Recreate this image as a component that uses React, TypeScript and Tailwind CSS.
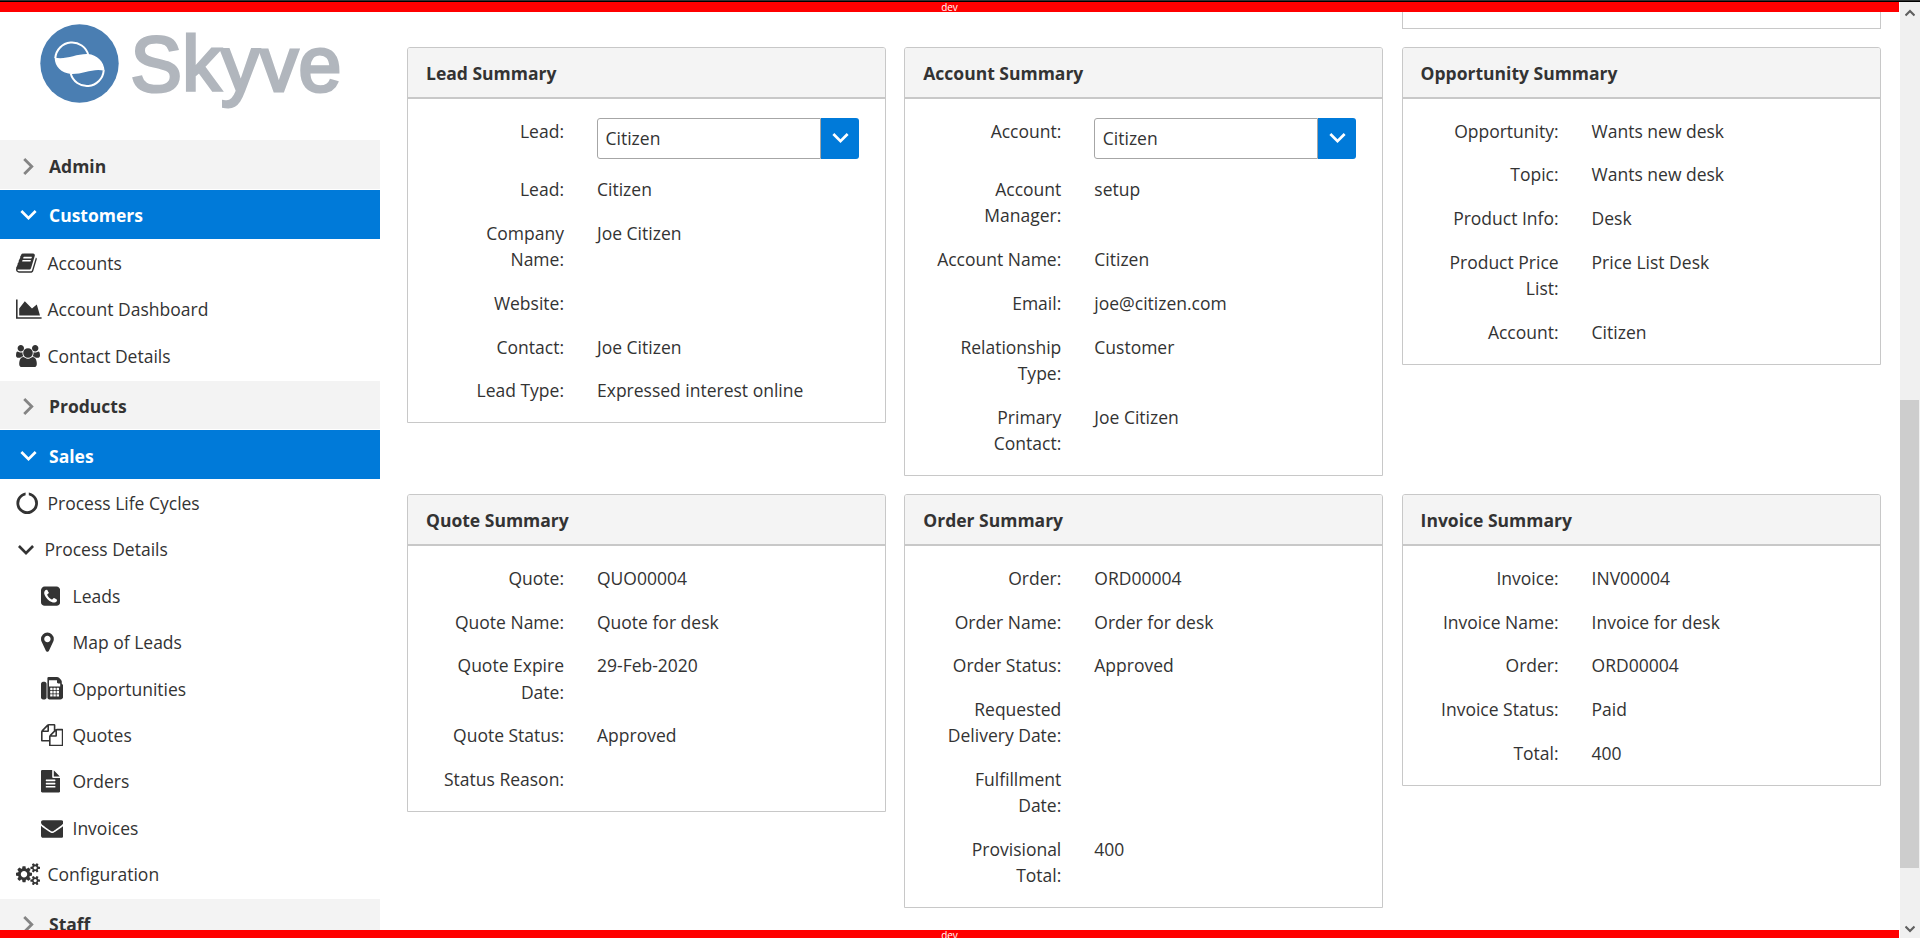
import React from "react";

type Glyph = { box: string; width: string; path: string };

const fileLine = (y: number) =>
  `M1280 ${y}v-64q0-14-9-23t-23-9h-704q-14 0-23 9t-9 23v64q0 14 9 23t23 9h704q14 0 23-9t9-23z`;
const faxKey = (x: number, y: number) =>
  `M${x} ${y}v-128q0-14-9-23t-23-9h-128q-14 0-23 9t-9 23v128q0 14 9 23t23 9h128q14 0 23-9t9-23z`;
const smallCog = (y: number) =>
  `M1920 ${y}v140q0 16-149 31-12 27-30 52 51 113 51 138 0 4-4 7-122 71-124 71-8 0-46-47t-52-68q-20 2-30 2t-30-2q-14 21-52 68t-46 47q-2 0-124-71-4-3-4-7 0-25 51-138-18-25-30-52-149-15-149-31v-140q0-16 149-31 13-29 30-52-51-113-51-138 0-4 4-7 4-2 35-20t59-34 30-16q8 0 46 46.5t52 67.5q20-2 30-2t30 2q51-71 92-112l6-2q4 0 124 70 4 3 4 7 0 25-51 138 17 23 30 52 149 15 149 31z`;

const glyphs: Record<string, Glyph> = {
  book: {
    box: "64 0 1664 1792",
    width: "w-[20.8px]",
    path: "M1703 478q40 57 18 129l-275 906q-19 64-76.5 107.5t-122.500 43.500h-923q-77 0-148.500-53.500t-99.500-131.500q-24-67-2-127 0-4 3-27t4-37q1-8-3-21.500t-3-19.500q2-11 8-21t16.500-23.500 16.500-23.500q23-38 45-91.500t30-91.500q3-10 .5-30t-.5-28q3-11 17-28t17-23q21-36 42-92t25-90q1-9-2.500-32t.5-28q4-13 22-30.500t22-22.500q19-26 42.500-84.500t27.500-96.500q1-8-3-25.500t-2-26.500q2-8 9-18t18-23 17-21q8-12 16.500-30.500t15-35 16-36 19.500-32 26.500-23.500 36-11.500 47.500 5.500l-1 3q38-9 51-9h761q74 0 114 56t18 130l-274 906q-36 119-71.500 153.500t-128.500 34.500h-869q-27 0-38 15-11 16-1 43 24 70 144 70h923q29 0 56-15.500t35-41.500l300-987q7-22 5-57 38 15 59 43zm-1064 2q-4 13 2 22.500t20 9.500h608q13 0 25.500-9.500t16.500-22.500l21-64q4-13-2-22.500t-20-9.500h-608q-13 0-25.500 9.500t-16.500 22.500zm-83 256q-4 13 2 22.500t20 9.500h608q13 0 25.500-9.500t16.500-22.500l21-64q4-13-2-22.500t-20-9.500h-608q-13 0-25.500 9.500t-16.500 22.500z",
  },
  chart: {
    box: "0 0 2048 1792",
    width: "w-[25.6px]",
    path: "M2048 1536v128h-2048v-1536h128v1408h1920zm-384-1024l256 896h-1664v-576l448-576 576 576z",
  },
  users: {
    box: "-64 0 1920 1792",
    width: "w-[24px]",
    path: "M529 896q-162 5-265 128h-134q-82 0-138-40.5t-56-118.500q0-353 124-353 6 0 43.500 21t97.500 42.500 119 21.500q67 0 133-23-5 37-5 66 0 139 81 256zm1071 637q0 120-73 189.500t-194 69.500h-874q-121 0-194-69.500t-73-189.500q0-53 3.500-103.500t14-109 26.500-108.500 43-97.500 62-81 85.500-53.500 111.500-20q10 0 43 21.500t73 48 107 48 135 21.500 135-21.500 107-48 73-48 43-21.500q61 0 111.500 20t85.500 53.500 62 81 43 97.500 26.500 108.500 14 109 3.500 103.500zm-1024-1277q0 106-75 181t-181 75-181-75-75-181 75-181 181-75 181 75 75 181zm704 384q0 159-112.500 271.500t-271.500 112.500-271.500-112.500-112.500-271.500 112.500-271.500 271.500-112.500 271.500 112.500 112.500 271.500zm576 225q0 78-56 118.500t-138 40.500h-134q-103-123-265-128 81-117 81-256 0-29-5-66 66 23 133 23 59 0 119-21.500t97.500-42.500 43.500-21q124 0 124 353zm-128-609q0 106-75 181t-181 75-181-75-75-181 75-181 181-75 181 75 75 181z",
  },
  notch: {
    box: "0 0 1792 1792",
    width: "w-[22.4px]",
    path: "M1760 896q0 176-68.500 336t-184 275.500-275.500 184-336 68.500-336-68.500-275.500-184-184-275.500-68.500-336q0-213 97-398.500t265-305.500 374-151v228q-221 45-366.500 221t-145.500 406q0 130 51 248.500t136.500 204 204 136.5 248.500 51 248.500-51 204-136.500 136.500-204 51-248.500q0-230-145.500-406t-366.500-221v-228q206 31 374 151t265 305.500 97 398.500z",
  },
  phone: {
    box: "128 0 1536 1792",
    width: "w-[19.2px]",
    path: "M1408 1193q0-11-2-16t-18-16.500-40.500-25-47.500-26.500-45.500-25-28.500-15q-5-3-19-13t-25-15-21-5q-15 0-36.500 20.500t-39.500 45-38.500 45-33.500 20.500q-7 0-16.500-3.500t-15.500-6.500-17-9.500-14-8.500q-99-55-170-126.500t-127-170.500q-2-3-8.500-14t-9.500-17-6.500-15.500-3.500-16.500q0-13 20.500-33.500t45-38.500 45-39.500 20.500-36.500q0-10-5-21t-15-25-13-19q-3-6-15-28.500t-25-45.500-26.500-47.500-25-40.500-16.500-18-16-2q-48 0-101 22-46 21-80 94.500t-34 130.500q0 16 2.500 34t5 30.500 9 33 10 29.500 12.500 33 11 30q60 164 216.500 320.500t320.500 216.500q6 2 30 11t33 12.500 29.500 10 33 9 30.500 5 34 2.500q57 0 130.500-34t94.500-80q22-53 22-101zm256-777v960q0 119-84.500 203.500t-203.500 84.500h-960q-119 0-203.500-84.500t-84.500-203.500v-960q0-119 84.500-203.500t203.500-84.500h960q119 0 203.500 84.500t84.500 203.500z",
  },
  marker: {
    box: "384 0 1024 1792",
    width: "w-[12.8px]",
    path: "M1152 640q0-106-75-181t-181-75-181 75-75 181 75 181 181 75 181-75 75-181zm256 0q0 109-33 179l-364 774q-16 33-47.500 52t-67.500 19-67.500-19-46.500-52l-365-774q-33-70-33-179 0-212 150-362t362-150 362 150 150 362z",
  },
  fax: {
    box: "0 0 1792 1792",
    width: "w-[22.4px]",
    path:
      "M288 384q66 0 113 47t47 113v1088q0 66-47 113t-113 47h-128q-66 0-113-47t-47-113v-1088q0-66 47-113t113-47h128zm1376 163q58 34 93 93t35 128v768q0 106-75 181t-181 75h-864q-66 0-113-47t-47-113v-1536q0-40 28-68t68-28h672q40 0 88 20t76 48l152 152q28 28 48 76t20 88v163zM1536 768v-256h-160q-40 0-68-28t-28-68v-160h-640v512h896z" +
      [928, 1184, 1440].map((x) => [1024, 1280, 1536].map((y) => faxKey(x, y)).join("")).join(""),
  },
  files: {
    box: "0 0 1792 1792",
    width: "w-[22.4px]",
    path: "M1696 384q40 0 68 28t28 68v1216q0 40-28 68t-68 28h-960q-40 0-68-28t-28-68v-288h-544q-40 0-68-28t-28-68v-672q0-40 20-88t48-76l408-408q28-28 76-48t88-20h416q40 0 68 28t28 68v328q68-40 128-40h416zm-544 213l-299 299h299v-299zm-640-384l-299 299h299v-299zm196 647l316-316v-416h-384v416q0 40-28 68t-68 28h-416v640h512v-256q0-40 20-88t48-76zm956 804v-1152h-384v416q0 40-28 68t-68 28h-416v640h896z",
  },
  file: {
    box: "128 0 1536 1792",
    width: "w-[19.2px]",
    path:
      "M1596 476q14 14 28 36h-472v-472q22 14 36 28zm-476 164h544v1056q0 40-28 68t-68 28h-1344q-40 0-68-28t-28-68v-1600q0-40 28-68t68-28h800v544q0 40 28 68t68 28z" +
      fileLine(1376) + fileLine(1120) + fileLine(864),
  },
  envelope: {
    box: "0 0 1792 1792",
    width: "w-[22.4px]",
    path: "M1792 710v794q0 66-47 113t-113 47h-1472q-66 0-113-47t-47-113v-794q44 49 101 87 362 246 497 345 57 42 92.500 65.500t94.500 48 110 24.500h2q51 0 110-24.500t94.500-48 92.500-65.500q170-123 498-345 57-39 100-87zm0-294q0 79-49 151t-122 123q-376 261-468 325-10 7-42.500 31t-54 38.500-52 32.500-57.500 27-50 9h-2q-23 0-50-9t-57.500-27-52-32.500-54-38.500-42.500-31q-91-64-262-182.500t-205-142.500q-62-42-117-115.500t-55-136.500q0-78 41.500-130t118.500-52h1472q65 0 112.500 47t47.500 113z",
  },
  cogs: {
    box: "0 0 1920 1792",
    width: "w-[24px]",
    path:
      "M896 896q0-106-75-181t-181-75-181 75-75 181 75 181 181 75 181-75 75-181zm768 512q0-52-38-90t-90-38-90 38-38 90q0 53 37.500 90.500t90.500 37.500 90.500-37.500 37.500-90.500zm0-1024q0-52-38-90t-90-38-90 38-38 90q0 53 37.500 90.500t90.500 37.500 90.500-37.500 37.500-90.500zm-384 421v185q0 10-7 19.500t-16 10.500l-155 24q-11 35-32 76 34 48 90 115 7 11 7 20 0 12-7 19-23 30-82.500 89.500t-78.500 59.500q-11 0-21-7l-115-90q-37 19-77 31-11 108-23 155-7 24-30 24h-186q-11 0-20-7.500t-10-17.500l-23-153q-34-10-75-31l-118 89q-7 7-20 7-11 0-21-8-144-133-144-160 0-9 7-19 10-14 41-53t47-61q-23-44-35-82l-152-24q-10-1-17-9.500t-7-19.500v-185q0-10 7-19.500t16-10.500l155-24q11-35 32-76-34-48-90-115-7-11-7-20 0-12 7-20 22-30 82-89t79-59q11 0 21 7l115 90q34-18 77-32 11-108 23-154 7-24 30-24h186q11 0 20 7.500t10 17.500l23 153q34 10 75 31l118-89q8-7 20-7 11 0 21 8 144 133 144 160 0 8-7 19-12 16-42 54t-45 60q23 48 34 82l152 23q10 2 17 10.500t7 19.500z" +
      smallCog(1338) + smallCog(314),
  },
};

const Icon = ({ name }: { name: string }) => {
  const g = glyphs[name];
  return (
    <svg viewBox={g.box} className={`${g.width} h-[22.4px] shrink-0 fill-[#333333]`} fillRule="evenodd">
      <path d={g.path} />
    </svg>
  );
};

const ChevronDown = ({ className }: { className: string }) => (
  <svg viewBox="6 8.59 12 7.41" className={`shrink-0 ${className}`} fill="currentColor">
    <path d="M7.41 8.59L12 13.17l4.59-4.58L18 10l-6 6-6-6z" />
  </svg>
);

const ChevronRight = () => (
  <svg viewBox="8.59 6 7.41 12" className="ml-[3px] mr-[3px] h-[17px] w-[11px] shrink-0 text-[#848484]" fill="currentColor">
    <path d="M8.59 16.59L13.17 12 8.59 7.41 10 6l6 6-6 6z" />
  </svg>
);

const Logo = () => (
  <div className="flex h-[128px] shrink-0 items-start pl-10 pt-3">
    <svg viewBox="0 0 79 79" className="h-[79px] w-[79px] shrink-0">
      <circle cx="39.5" cy="39.5" r="39.2" fill="#4a7eb2" />
      <path d="M15.3 34A16.8 16.8 0 0 1 48.300 31" fill="none" stroke="#fff" strokeWidth="2" />
      <path d="M63.700 46.500A16.800 16.800 0 0 1 30.700 49.500" fill="none" stroke="#fff" strokeWidth="2" />
      <path d="M14.600 33.500C25 36.500 36 29.500 48 30C57 31 64 37 64.600 47C54 43.500 43 50.500 31 50C21 48.500 15 43 14.600 33.500Z" fill="#fff" />
    </svg>
    <span className="ml-[11.500px] mt-[1px] font-['Liberation_Sans',sans-serif] text-[77px] leading-[79px] tracking-[0.3px] text-[#b1b6bd] [-webkit-text-stroke:3px_#b1b6bd]">
      Skyve
    </span>
  </div>
);

const Section = ({ label, open, className = "h-[49px] pt-[3px]" }: { label: string; open?: boolean; className?: string }) => (
  <div
    className={`flex shrink-0 items-center pl-5 font-bold ${
      open ? "bg-[#007ad9] text-white" : "bg-[#f3f3f3]"
    } ${className}`}
  >
    {open ? <ChevronDown className="h-[10px] w-[17px]" /> : <ChevronRight />}
    <span className="ml-3">{label}</span>
  </div>
);

const Item = ({ icon, label, sub }: { icon: string; label: string; sub?: boolean }) => (
  <div className={`flex h-[46.375px] shrink-0 items-center ${sub ? "pl-[41px]" : "pl-4"}`}>
    <div className="flex w-[31.5px] shrink-0">
      <Icon name={icon} />
    </div>
    <span>{label}</span>
  </div>
);

const Sidebar = () => (
  <aside className="flex w-[380px] shrink-0 flex-col overflow-hidden">
    <Logo />
    <Section label="Admin" />
    <Section label="Customers" open className="mt-px h-[49px] pt-px" />
    <div className="flex h-[142px] shrink-0 flex-col pt-px">
      <Item icon="book" label="Accounts" />
      <Item icon="chart" label="Account Dashboard" />
      <Item icon="users" label="Contact Details" />
    </div>
    <Section label="Products" className="h-12 pt-[3px]" />
    <Section label="Sales" open className="mt-px h-[49px] pt-[3px]" />
    <div className="flex h-[420px] shrink-0 flex-col pt-px">
      <Item icon="notch" label="Process Life Cycles" />
      <div className="flex h-[46.375px] shrink-0 items-center pl-[18px]">
        <ChevronDown className="h-[10px] w-4" />
        <span className="ml-[10.500px]">Process Details</span>
      </div>
      <Item icon="phone" label="Leads" sub />
      <Item icon="marker" label="Map of Leads" sub />
      <Item icon="fax" label="Opportunities" sub />
      <Item icon="files" label="Quotes" sub />
      <Item icon="file" label="Orders" sub />
      <Item icon="envelope" label="Invoices" sub />
      <Item icon="cogs" label="Configuration" />
    </div>
    <Section label="Staff" className="h-[49px] pt-px" />
  </aside>
);

type Row = { label: string; value?: string; select?: boolean };

const Panel = ({ title, rows }: { title: string; rows: Row[] }) => (
  <section className="rounded-t-[3px] border border-[#c8c8c8]">
    <h2 className="h-[51px] rounded-t-[2px] border-b-2 border-[#c8c8c8] bg-[#f4f4f4] pl-[18px] pt-3 font-bold">{title}</h2>
    <div className="py-[10px]">
      {rows.map((r, i) => (
        <div key={i} className="flex py-[8.75px]">
          <div className="ml-[26px] w-[130px] shrink-0 text-right">{r.label}:</div>
          {r.select ? (
            <div className="ml-[33px] flex h-[41px] w-[262px]">
              <div className="grow rounded-l-[3px] border border-[#a6a6a6] pl-[7.5px] pt-[6px]">{r.value}</div>
              <div className="flex w-[38px] items-center justify-center rounded-r-[3px] bg-[#007ad9] text-white">
                <ChevronDown className="h-[10px] w-[17px]" />
              </div>
            </div>
          ) : (
            <div className="ml-[33px]">{r.value}</div>
          )}
        </div>
      ))}
    </div>
  </section>
);

const topPanels: { title: string; rows: Row[] }[] = [
  {
    title: "Lead Summary",
    rows: [
      { label: "Lead", value: "Citizen", select: true },
      { label: "Lead", value: "Citizen" },
      { label: "Company Name", value: "Joe Citizen" },
      { label: "Website" },
      { label: "Contact", value: "Joe Citizen" },
      { label: "Lead Type", value: "Expressed interest online" },
    ],
  },
  {
    title: "Account Summary",
    rows: [
      { label: "Account", value: "Citizen", select: true },
      { label: "Account Manager", value: "setup" },
      { label: "Account Name", value: "Citizen" },
      { label: "Email", value: "joe@citizen.com" },
      { label: "Relationship Type", value: "Customer" },
      { label: "Primary Contact", value: "Joe Citizen" },
    ],
  },
  {
    title: "Opportunity Summary",
    rows: [
      { label: "Opportunity", value: "Wants new desk" },
      { label: "Topic", value: "Wants new desk" },
      { label: "Product Info", value: "Desk" },
      { label: "Product Price List", value: "Price List Desk" },
      { label: "Account", value: "Citizen" },
    ],
  },
];

const bottomPanels: { title: string; rows: Row[] }[] = [
  {
    title: "Quote Summary",
    rows: [
      { label: "Quote", value: "QUO00004" },
      { label: "Quote Name", value: "Quote for desk" },
      { label: "Quote Expire Date", value: "29-Feb-2020" },
      { label: "Quote Status", value: "Approved" },
      { label: "Status Reason" },
    ],
  },
  {
    title: "Order Summary",
    rows: [
      { label: "Order", value: "ORD00004" },
      { label: "Order Name", value: "Order for desk" },
      { label: "Order Status", value: "Approved" },
      { label: "Requested Delivery Date" },
      { label: "Fulfillment Date" },
      { label: "Provisional Total", value: "400" },
    ],
  },
  {
    title: "Invoice Summary",
    rows: [
      { label: "Invoice", value: "INV00004" },
      { label: "Invoice Name", value: "Invoice for desk" },
      { label: "Order", value: "ORD00004" },
      { label: "Invoice Status", value: "Paid" },
      { label: "Total", value: "400" },
    ],
  },
];

const columns = "grid grid-cols-[479px_479px_479px] items-start gap-x-[18.3px]";

const Scrollbar = () => (
  <div className="flex w-5 shrink-0 flex-col items-center bg-[#f0f0f0] text-[#606060]">
    <svg viewBox="0 0 10 8" className="mt-[7px] h-2 w-[10px] shrink-0" fill="none" stroke="currentColor" strokeWidth="2.2">
      <path d="M0.500 6.500L5 2L9.500 6.500" />
    </svg>
    <div className="mr-px mt-[383px] h-[468px] w-[19px] shrink-0 bg-[#cdcdcd]" />
    <svg viewBox="0 0 10 8" className="mt-[57px] h-2 w-[10px] shrink-0" fill="none" stroke="currentColor" strokeWidth="2.2">
      <path d="M0.500 1.500L5 6L9.500 1.500" />
    </svg>
  </div>
);

export default function App() {
  return (
    <div className="flex h-[938px] w-[1920px] flex-col overflow-hidden bg-white font-['Open_Sans',sans-serif] text-[17.5px] leading-[26.25px] text-[#333333]">
      <div className="h-[2px] shrink-0 border-b border-black bg-[#333333]" />
      <div className="flex min-h-0 grow">
        <div className="mr-px flex w-[1899px] shrink-0 flex-col">
          <div className="flex h-[10px] shrink-0 justify-center bg-[#ff0000] text-[10px] leading-[11px] text-white">dev</div>
          <div className="flex min-h-0 grow overflow-hidden">
            <Sidebar />
            <main className="ml-[27px] w-[1474px] shrink-0">
              <div className={columns}>
                <div className="col-start-3 h-[17px] border border-t-0 border-[#c8c8c8]" />
              </div>
              <div className={`mt-[17.95px] ${columns}`}>
                {topPanels.map((p) => (
                  <Panel key={p.title} {...p} />
                ))}
              </div>
              <div className={`mt-[18.25px] ${columns}`}>
                {bottomPanels.map((p) => (
                  <Panel key={p.title} {...p} />
                ))}
              </div>
            </main>
          </div>
          <div className="flex h-2 shrink-0 justify-center overflow-hidden bg-[#ff0000] text-[10px] leading-[11px] text-white">dev</div>
        </div>
        <Scrollbar />
      </div>
    </div>
  );
}
